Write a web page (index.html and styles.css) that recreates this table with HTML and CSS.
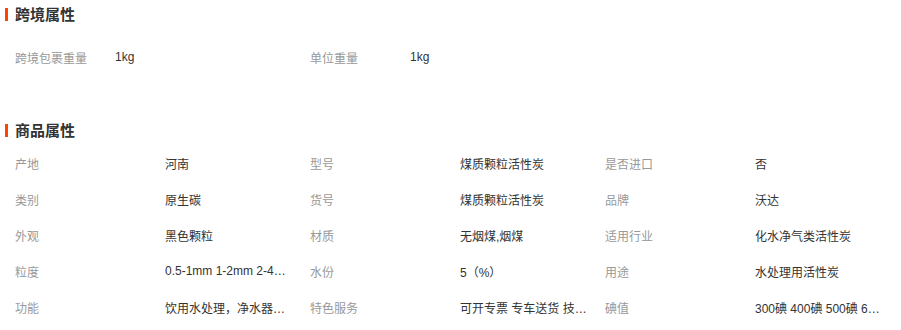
FILE: index.html
```html
<!DOCTYPE html>
<html lang="zh-CN">
<head>
<meta charset="utf-8">
<title>属性</title>
<link rel="stylesheet" href="styles.css">
</head>
<body>
<div class="attrs">
  <h3 class="title">跨境属性</h3>
  <div class="grid grid-cb">
    <div class="item"><span class="name">跨境包裹重量</span><span class="val">1kg</span></div>
    <div class="item"><span class="name">单位重量</span><span class="val">1kg</span></div>
  </div>

  <h3 class="title title-2">商品属性</h3>
  <div class="grid grid-goods">
    <div class="item"><span class="name">产地</span><span class="val">河南</span></div>
    <div class="item"><span class="name">型号</span><span class="val">煤质颗粒活性炭</span></div>
    <div class="item"><span class="name">是否进口</span><span class="val">否</span></div>
    <div class="item"><span class="name">类别</span><span class="val">原生碳</span></div>
    <div class="item"><span class="name">货号</span><span class="val">煤质颗粒活性炭</span></div>
    <div class="item"><span class="name">品牌</span><span class="val">沃达</span></div>
    <div class="item"><span class="name">外观</span><span class="val">黑色颗粒</span></div>
    <div class="item"><span class="name">材质</span><span class="val">无烟煤,烟煤</span></div>
    <div class="item"><span class="name">适用行业</span><span class="val">化水净气类活性炭</span></div>
    <div class="item"><span class="name">粒度</span><span class="val">0.5-1mm 1-2mm 2-4mm 4-8mm</span></div>
    <div class="item"><span class="name">水份</span><span class="val">5（%）</span></div>
    <div class="item"><span class="name">用途</span><span class="val">水处理用活性炭</span></div>
    <div class="item"><span class="name">功能</span><span class="val">饮用水处理，净水器滤芯</span></div>
    <div class="item"><span class="name">特色服务</span><span class="val">可开专票 专车送货 技术指导</span></div>
    <div class="item"><span class="name">碘值</span><span class="val">300碘 400碘 500碘 600碘</span></div>
  </div>
</div>
</body>
</html>
```

FILE: styles.css
```css
html, body {
  margin: 0;
  padding: 0;
  background: #fff;
}

.attrs {
  width: 901px;
  font-family: "Liberation Sans", "Noto Sans CJK SC", sans-serif;
  font-size: 12px;
  color: #333;
}

.title {
  margin: 3px 0 14px 5px;
  height: 22px;
  display: flex;
  align-items: center;
  gap: 7px;
  font-family: "Noto Sans CJK SC", sans-serif;
  font-size: 15px;
  line-height: 22px;
  font-weight: bold;
  color: #333;
}

.title::before {
  content: "";
  width: 3px;
  height: 13px;
  background: #ff4400;
}

.title-2 {
  margin-top: 44px;
  margin-bottom: 4px;
}

.grid {
  display: grid;
  grid-template-columns: repeat(3, 295px);
  padding-left: 15px;
}

.grid-cb {
  grid-template-columns: repeat(2, 295px);
}

.item {
  display: flex;
  align-items: center;
  height: 36px;
  min-width: 0;
}

.name {
  flex: 0 0 150px;
  color: #999;
  white-space: nowrap;
}

.grid-cb .name {
  flex-basis: 100px;
}

.val {
  width: 127px;
  color: #333;
  white-space: nowrap;
  overflow: hidden;
  text-overflow: ellipsis;
}
```
